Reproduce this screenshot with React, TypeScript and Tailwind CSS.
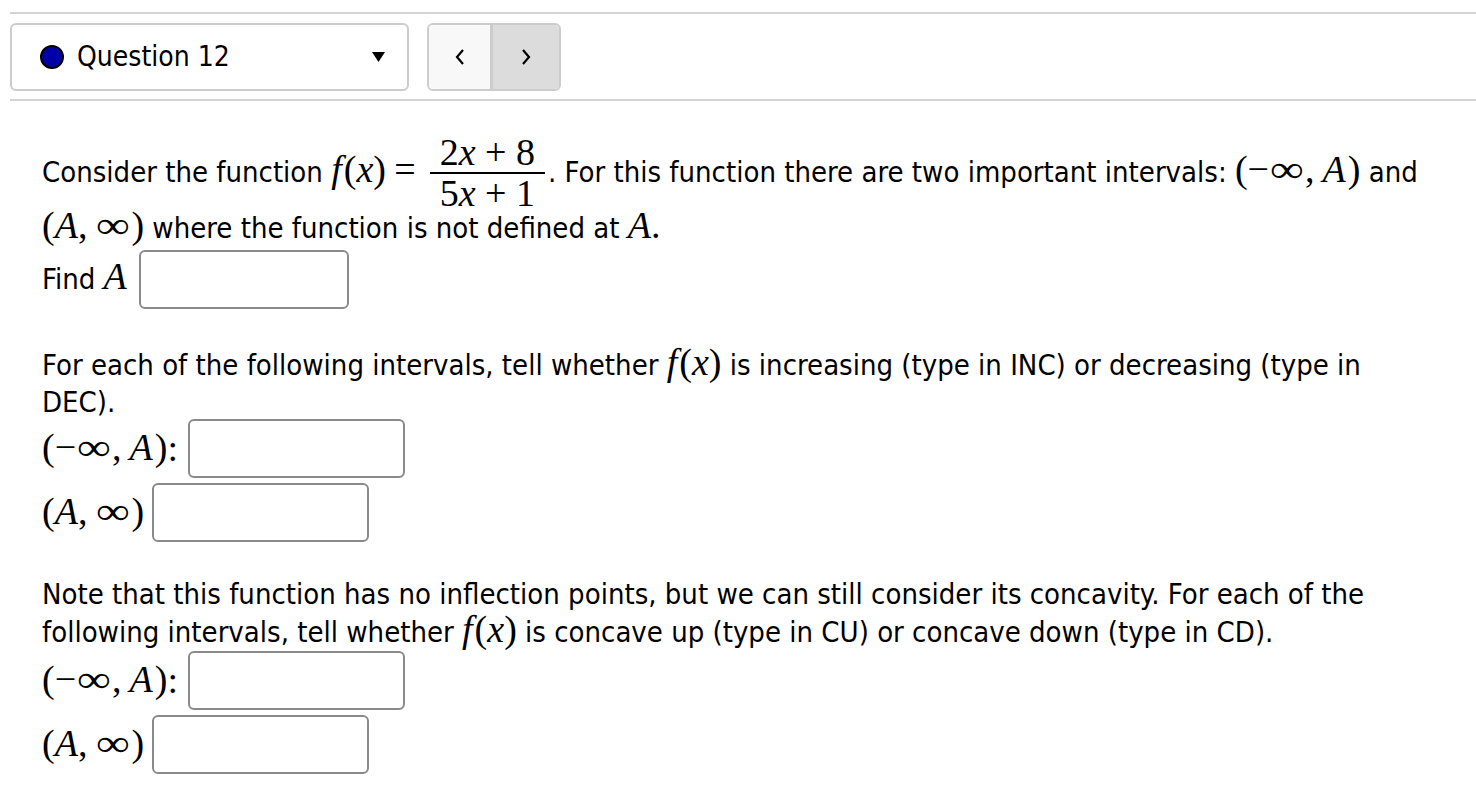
import type { ReactNode } from "react";

const serif = "font-['Liberation_Serif','DejaVu_Serif',serif]";

function V({ children }: { children: ReactNode }) {
  return <span className={`${serif} italic`}>{children}</span>;
}

function M({ children }: { children: ReactNode }) {
  return <span className={`${serif} text-[38px] leading-[20px] not-italic`}>{children}</span>;
}

function Thin() {
  return <span className="inline-block w-[8px]" />;
}

function Inf() {
  return <span className="inline-block w-[36px] scale-x-[1.25] text-center">∞</span>;
}

function Fx() {
  return (
    <M>
      <V>f</V>
      <span className="inline-block w-[2px]" />(<V>x</V>)
    </M>
  );
}

function NegInterval() {
  return (
    <M>
      (−<Inf />,
      <Thin />
      <V>A</V>
      <span className="inline-block w-[2px]" />)
    </M>
  );
}

function PosInterval() {
  return (
    <M>
      (<V>A</V>,
      <Thin />
      <Inf />)
    </M>
  );
}

function AnswerBox({ width }: { width: string }) {
  return (
    <input
      type="text"
      className={`ml-[10px] h-[59px] ${width} rounded-[6px] border-2 border-[#8a8a8a] bg-white outline-none`}
    />
  );
}

function Fraction() {
  return (
    <span className={`ml-[14px] mr-[3px] inline-flex flex-col items-center ${serif} text-[38px]`}>
      <span className="px-[10px] pb-[2px] leading-[36px]">
        2<V>x</V> + 8
      </span>
      <span className="h-[2px] w-full bg-black" />
      <span className="px-[10px] pt-[1px] leading-[36px]">
        5<V>x</V> + 1
      </span>
    </span>
  );
}

function QuestionPicker() {
  return (
    <div className="flex h-[68px] w-[399px] items-center rounded-[6px] border-2 border-[#cccccc] bg-white pl-[28px] pr-[20px]">
      <span className="h-[24px] w-[24px] rounded-full border-2 border-black bg-[#0000a8]" />
      <span className="ml-[13px] flex-1 text-[28px]">Question 12</span>
      <svg width="13" height="10" viewBox="0 0 13 10" className="mr-[2px]">
        <path d="M0 0 H13 L6.5 10 Z" fill="black" />
      </svg>
    </div>
  );
}

function PagerButtons() {
  return (
    <div className="flex h-[68px] w-[134px] overflow-hidden rounded-[6px] border-2 border-[#cccccc]">
      <button className="flex w-[64px] items-center justify-center border-r-[3px] border-[#cccccc] bg-[#f8f8f8]">
        <svg width="12" height="18" viewBox="0 0 12 18">
          <path d="M9 2 L3 9 L9 16" fill="none" stroke="black" strokeWidth="2.2" />
        </svg>
      </button>
      <button className="flex flex-1 items-center justify-center bg-[#dcdcdc]">
        <svg width="12" height="18" viewBox="0 0 12 18">
          <path d="M3 2 L9 9 L3 16" fill="none" stroke="black" strokeWidth="2.2" />
        </svg>
      </button>
    </div>
  );
}

export default function App() {
  return (
    <div className="min-h-screen whitespace-nowrap bg-white pt-[12px] font-['DejaVu_Sans_Condensed','DejaVu_Sans',sans-serif] text-[29px] text-black">
      <div className="ml-[10px] h-[2px] bg-[#d4d4d4]" />
      <div className="flex gap-[18px] px-[10px] pt-[9px]">
        <QuestionPicker />
        <PagerButtons />
      </div>
      <div className="ml-[10px] mt-[8px] h-[2px] bg-[#d4d4d4]" />

      <div className="pl-[42px] pt-[33px]">
        <div className="flex items-center">
          <span>
            Consider the function <Fx /> <M>=</M>
          </span>
          <Fraction />
          <span>
            . For this function there are two important intervals: <NegInterval /> and
          </span>
        </div>
        <p className="leading-[34px]">
          <PosInterval /> where the function is not defined at{" "}
          <M>
            <V>A</V>.
          </M>
        </p>
        <div className="mt-[5px] flex items-center">
          <span>
            Find{" "}
            <M>
              <V>A</V>
            </M>
          </span>
          <span className="w-[2px]" />
          <AnswerBox width="w-[210px]" />
        </div>

        <p className="mt-[38px] leading-[37px]">
          For each of the following intervals, tell whether <Fx /> is increasing (type in INC) or decreasing (type in
          <br />
          DEC).
        </p>
        <div className="-mt-[2px] flex items-center">
          <NegInterval />
          <span className={`${serif} text-[38px]`}>:</span>
          <AnswerBox width="w-[217px]" />
        </div>
        <div className="mt-[5px] flex items-center">
          <PosInterval />
          <span className="-ml-[2px]" />
          <AnswerBox width="w-[217px]" />
        </div>

        <p className="mt-[33px] leading-[38px]">
          Note that this function has no inflection points, but we can still consider its concavity. For each of the
          <br />
          following intervals, tell whether <Fx /> is concave up (type in CU) or concave down (type in CD).
        </p>
        <div className="flex items-center">
          <NegInterval />
          <span className={`${serif} text-[38px]`}>:</span>
          <AnswerBox width="w-[217px]" />
        </div>
        <div className="mt-[5px] flex items-center">
          <PosInterval />
          <span className="-ml-[2px]" />
          <AnswerBox width="w-[217px]" />
        </div>
      </div>
    </div>
  );
}
